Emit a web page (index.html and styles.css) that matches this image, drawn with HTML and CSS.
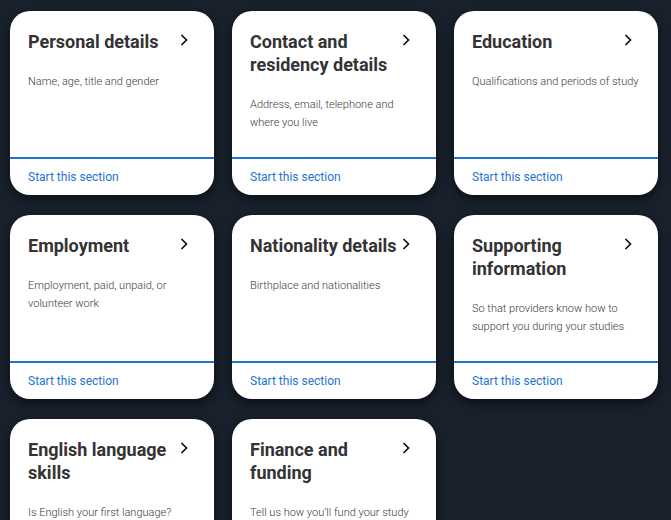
FILE: index.html
```html
<!DOCTYPE html>
<html lang="en">
<head>
<meta charset="utf-8">
<title>Application sections</title>
<link rel="stylesheet" href="styles.css">
</head>
<body>
<main class="grid">
  <a class="card" href="#">
    <div class="card-body">
      <div class="card-head"><h2 class="card-title">Personal details</h2><svg class="chev" viewBox="0 0 8 12" width="8" height="12"><path d="M1.5 1 L6.5 6 L1.5 11"/></svg></div>
      <p class="card-desc">Name, age, title and gender</p>
    </div>
    <div class="card-foot">Start this section</div>
  </a>
  <a class="card" href="#">
    <div class="card-body">
      <div class="card-head"><h2 class="card-title">Contact and residency details</h2><svg class="chev" viewBox="0 0 8 12" width="8" height="12"><path d="M1.5 1 L6.5 6 L1.5 11"/></svg></div>
      <p class="card-desc">Address, email, telephone and where you live</p>
    </div>
    <div class="card-foot">Start this section</div>
  </a>
  <a class="card" href="#">
    <div class="card-body">
      <div class="card-head"><h2 class="card-title">Education</h2><svg class="chev" viewBox="0 0 8 12" width="8" height="12"><path d="M1.5 1 L6.5 6 L1.5 11"/></svg></div>
      <p class="card-desc">Qualifications and periods of study</p>
    </div>
    <div class="card-foot">Start this section</div>
  </a>
  <a class="card" href="#">
    <div class="card-body">
      <div class="card-head"><h2 class="card-title">Employment</h2><svg class="chev" viewBox="0 0 8 12" width="8" height="12"><path d="M1.5 1 L6.5 6 L1.5 11"/></svg></div>
      <p class="card-desc">Employment, paid, unpaid, or volunteer work</p>
    </div>
    <div class="card-foot">Start this section</div>
  </a>
  <a class="card" href="#">
    <div class="card-body">
      <div class="card-head"><h2 class="card-title">Nationality details</h2><svg class="chev" viewBox="0 0 8 12" width="8" height="12"><path d="M1.5 1 L6.5 6 L1.5 11"/></svg></div>
      <p class="card-desc">Birthplace and nationalities</p>
    </div>
    <div class="card-foot">Start this section</div>
  </a>
  <a class="card" href="#">
    <div class="card-body">
      <div class="card-head"><h2 class="card-title">Supporting information</h2><svg class="chev" viewBox="0 0 8 12" width="8" height="12"><path d="M1.5 1 L6.5 6 L1.5 11"/></svg></div>
      <p class="card-desc">So that providers know how to support you during your studies</p>
    </div>
    <div class="card-foot">Start this section</div>
  </a>
  <a class="card" href="#">
    <div class="card-body">
      <div class="card-head"><h2 class="card-title">English language skills</h2><svg class="chev" viewBox="0 0 8 12" width="8" height="12"><path d="M1.5 1 L6.5 6 L1.5 11"/></svg></div>
      <p class="card-desc">Is English your first language?</p>
    </div>
    <div class="card-foot">Start this section</div>
  </a>
  <a class="card" href="#">
    <div class="card-body">
      <div class="card-head"><h2 class="card-title">Finance and funding</h2><svg class="chev" viewBox="0 0 8 12" width="8" height="12"><path d="M1.5 1 L6.5 6 L1.5 11"/></svg></div>
      <p class="card-desc">Tell us how you’ll fund your study</p>
    </div>
    <div class="card-foot">Start this section</div>
  </a>
</main>
</body>
</html>
```

FILE: styles.css
```css
html, body {
  margin: 0;
  padding: 0;
  background: #19212d;
}
body {
  font-family: Roboto, "Liberation Sans", sans-serif;
  height: 520px;
  overflow: hidden;
}
.grid {
  display: grid;
  grid-template-columns: repeat(3, 204px);
  grid-auto-rows: 184px;
  column-gap: 18px;
  row-gap: 20px;
  padding: 11px 0 0 10px;
}
.card {
  display: flex;
  flex-direction: column;
  background: #fff;
  border-radius: 20px;
  box-shadow: 0 4px 12px rgba(0, 0, 0, 0.55);
  text-decoration: none;
  overflow: hidden;
}
.card-body {
  flex: 1;
  padding: 19px 18px 0 18px;
}
.card-head {
  display: flex;
  align-items: flex-start;
  justify-content: space-between;
  gap: 4px;
  padding-right: 8px;
}
.card-title {
  margin: 0;
  font-size: 18px;
  line-height: 23px;
  font-weight: 700;
  color: #333;
}
.chev {
  flex: none;
  margin-top: 4px;
  fill: none;
  stroke: #111;
  stroke-width: 1.7;
}
.card-desc {
  margin: 20px 0 0;
  font-size: 11px;
  line-height: 18px;
  font-weight: 300;
  color: #3a3a3a;
}
.card-foot {
  border-top: 2px solid #1e74d2;
  height: 36px;
  padding-left: 18px;
  display: flex;
  align-items: center;
  font-size: 12px;
  font-weight: 400;
  color: #1e74d2;
}
```
